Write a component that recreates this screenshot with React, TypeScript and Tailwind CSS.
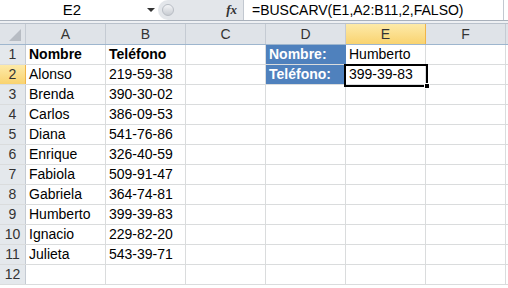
const cols = ['A', 'B', 'C', 'D', 'E', 'F']

const data: Record<number, string[]> = {
  1: ['Nombre', 'Teléfono', '', 'Nombre:', 'Humberto', ''],
  2: ['Alonso', '219-59-38', '', 'Teléfono:', '399-39-83', ''],
  3: ['Brenda', '390-30-02'],
  4: ['Carlos', '386-09-53'],
  5: ['Diana', '541-76-86'],
  6: ['Enrique', '326-40-59'],
  7: ['Fabiola', '509-91-47'],
  8: ['Gabriela', '364-74-81'],
  9: ['Humberto', '399-39-83'],
  10: ['Ignacio', '229-82-20'],
  11: ['Julieta', '543-39-71'],
  12: [],
}

const font = { fontFamily: '"Liberation Sans", Arial, sans-serif' }

function FormulaBar() {
  return (
    <div className="flex h-[21px] border-b border-[#a9b1bb] bg-white">
      <div className="relative w-[158px] flex items-center justify-center text-[15px] text-black pr-[14px]">
        E2
        <span className="absolute right-[3px] top-[8px] w-0 h-0 border-l-[4px] border-r-[4px] border-t-[4px] border-l-transparent border-r-transparent border-t-[#333]" />
      </div>
      <div className="w-[86px] flex items-center bg-[#e3e6ea] rounded-l-[10px] border-r border-[#c2c8d0]">
        <div className="ml-[4px] w-[12px] h-[12px] rounded-full bg-gradient-to-b from-[#f4f5f7] to-[#c8ccd2] border border-[#b8bdc4]" />
        <span className="ml-auto mr-[6px] italic font-bold text-[13px] text-[#333]" style={{ fontFamily: '"Liberation Serif", serif' }}>
          fx
        </span>
      </div>
      <div className="flex-1 flex items-center pl-[8px] text-[14px] text-black border-r border-[#c2c8d0] mr-[4px]">
        =BUSCARV(E1,A2:B11,2,FALSO)
      </div>
    </div>
  )
}

function Header() {
  return (
    <div className="flex h-[21px] border-b border-[#9eb6ce]">
      <div className="relative w-[26px] shrink-0 bg-[#dfe3e8] border-r border-[#c5cbd3]">
        <span className="absolute right-[4px] bottom-[3px] w-0 h-0" style={{ borderBottom: '12px solid #b7bcc3', borderLeft: '12px solid transparent' }} />
      </div>
      {cols.map((c) => (
        <div
          key={c}
          className={
            'w-[80px] shrink-0 flex items-center justify-center text-[14px] border-r ' +
            (c === 'E'
              ? 'bg-gradient-to-b from-[#fdeaa8] to-[#f9d36f] border-[#f0b549] text-[#333]'
              : 'bg-[#dfe3e8] border-[#c5cbd3] text-[#333]')
          }
        >
          {c}
        </div>
      ))}
      <div className="flex-1 bg-[#dfe3e8]" />
    </div>
  )
}

function Row({ n }: { n: number }) {
  const vals = data[n] || []
  return (
    <div className="flex h-[20px] border-b border-[#dadcdd]">
      <div
        className={
          'w-[26px] shrink-0 flex items-center justify-center text-[14px] border-r ' +
          (n === 2
            ? 'bg-gradient-to-b from-[#fdeaa8] to-[#f9d36f] border-[#f0b549] text-[#333]'
            : 'bg-[#e4e8ec] border-[#c5cbd3] text-[#333]')
        }
      >
        {n}
      </div>
      {cols.map((c, i) => {
        const v = vals[i] || ''
        const label = i === 3 && (n === 1 || n === 2)
        const bold = n === 1 && i < 2
        return (
          <div
            key={c}
            className={
              'w-[80px] shrink-0 flex items-center pl-[3px] text-[14px] whitespace-nowrap border-r ' +
              (label ? 'bg-[#4f81bd] text-white font-bold border-[#4f81bd]' : 'text-black border-[#dadcdd]') +
              (bold ? ' font-bold' : '')
            }
          >
            {v}
          </div>
        )
      })}
      <div className="flex-1" />
    </div>
  )
}

export default function App() {
  return (
    <div className="w-[508px] h-[288px] overflow-hidden bg-white relative" style={font}>
      <FormulaBar />
      <div className="h-[3px] bg-[#eef0f3] border-b border-[#b9c1cb]" />
      <Header />
      {Array.from({ length: 12 }, (_, i) => (
        <Row key={i} n={i + 1} />
      ))}
      {/* active cell E2 */}
      <div className="absolute left-[344px] top-[64px] w-[84px] h-[23px] border-2 border-black pointer-events-none" />
      <div className="absolute left-[424px] top-[83px] w-[6px] h-[6px] bg-black border border-white" />
    </div>
  )
}
